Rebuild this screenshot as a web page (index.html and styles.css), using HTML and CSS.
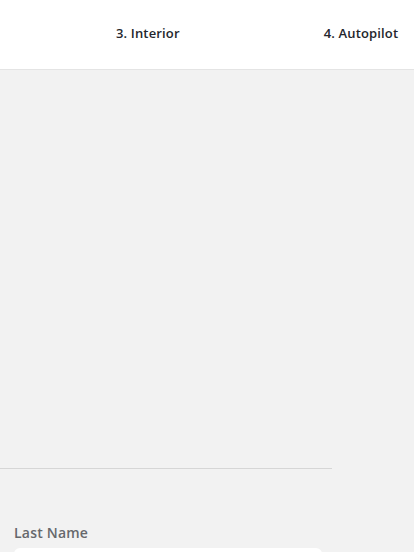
FILE: index.html
```html
<!DOCTYPE html>
<html lang="en">

<head>
     <meta charset="UTF-8">
     <meta name="viewport" content="width=device-width, initial-scale=1.0">
     <title>Design your car</title>
     <link rel="stylesheet" href="styles.css">
</head>

<body>

     <div id="wrapper">
          <header class="steps">
               <nav class="steps-nav">
                    <a class="step">3. Interior</a>
                    <a class="step">4. Autopilot</a>
               </nav>
          </header>
          <main class="order">
               <div class="preview"></div>
               <div class="divider"></div>
               <form class="order-form">
                    <label class="field-label" for="last-name">Last Name</label>
                    <input class="field-input" type="text" id="last-name">
               </form>
          </main>
     </div>

</body>

</html>
```

FILE: styles.css
```css
* {
     padding: 0;
     margin: 0;
     box-sizing: border-box;
     font-family: 'Open Sans', 'Liberation Sans', sans-serif;
}

html,
body {
     width: 100%;
     height: 100%;
     overflow: hidden;
}

#wrapper {
     width: 100%;
     height: 100%;
     display: flex;
     flex-direction: column;
     background: #f2f2f2;
}

.steps {
     height: 70px;
     flex-shrink: 0;
     background: #ffffff;
     border-bottom: 1px solid #e4e4e4;
}

.steps-nav {
     display: flex;
     align-items: center;
     height: 100%;
     padding-left: 116px;
     padding-bottom: 4px;
     gap: 144px;
     white-space: nowrap;
}

.step {
     font-size: 13px;
     font-weight: 600;
     color: #23262c;
     letter-spacing: 0.15px;
}

.preview {
     height: 398px;
}

.divider {
     width: 332px;
     height: 1px;
     background: #d6d6d6;
}

.order-form {
     display: flex;
     flex-direction: column;
     padding: 54px 14px 0;
}

.field-label {
     font-size: 14px;
     font-weight: 600;
     color: #66686c;
     letter-spacing: 0.2px;
     margin-bottom: 6px;
}

.field-input {
     width: 308px;
     height: 40px;
     border: none;
     outline: none;
     border-radius: 6px;
     background: #ffffff;
}
```
